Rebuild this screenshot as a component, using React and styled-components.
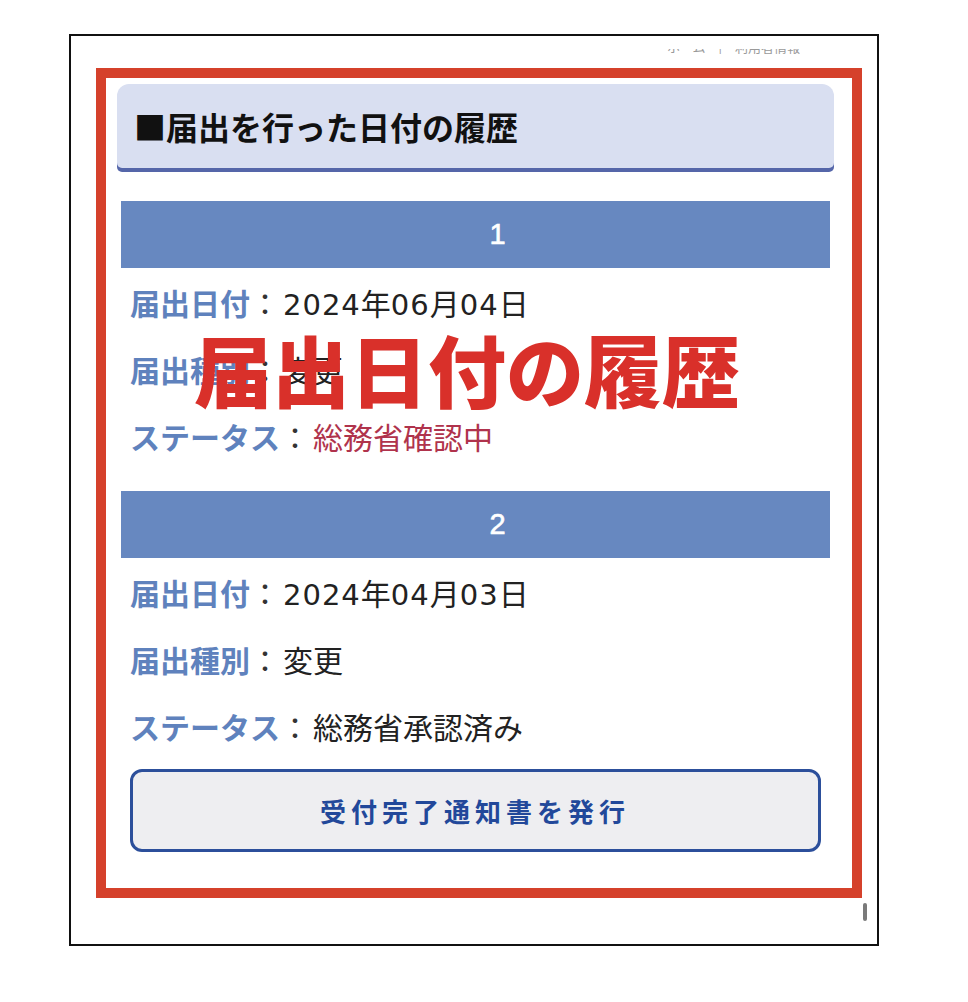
import React from "react";
import styled, { createGlobalStyle } from "styled-components";

const GlobalStyle = createGlobalStyle`
  body {
    margin: 0;
    background: #ffffff;
    font-family: "Noto Sans CJK JP", "Noto Sans", sans-serif;
  }
`;

const Frame = styled.div`
  position: relative;
  box-sizing: border-box;
  width: 810px;
  height: 912px;
  margin: 34px 0 0 69px;
  padding: 0 15px 0 25px;
  border: 2px solid #111111;
  background: #ffffff;
`;

const TopHint = styled.div`
  display: flex;
  justify-content: flex-end;
  height: 32px;
  padding: 13px 62px 0 0;
  box-sizing: border-box;
`;

// only the lower edge of this link row peeks out in the screenshot
const HintClip = styled.div`
  height: 5px;
  overflow: hidden;
  font-size: 13px;
  line-height: 14px;
  color: #9a9a9a;
  white-space: nowrap;
  & span {
    display: block;
    margin-top: -9px;
  }
`;

const RedFrame = styled.div`
  position: relative;
  box-sizing: border-box;
  height: 830px;
  border: 10px solid #d5412b;
  padding: 6px 18px 0 11px;
`;

const Heading = styled.div`
  display: flex;
  align-items: center;
  height: 84px;
  padding-left: 17px;
  border-radius: 12px 12px 5px 5px;
  background: #d9dff1;
  box-shadow: 0 4px 0 #5566a9;
  font-size: 32px;
  font-weight: 700;
  color: #111111;
`;

const Body = styled.div`
  display: flex;
  flex-direction: column;
  margin-top: 33px;
  padding: 0 4px;
`;

const Entries = styled.div`
  display: flex;
  flex-direction: column;
  gap: 22px;
`;

const Entry = styled.section`
  display: flex;
  flex-direction: column;
`;

const NumberBar = styled.div`
  display: flex;
  align-items: center;
  justify-content: center;
  height: 67px;
  padding-left: 44px;
  background: #6788c0;
  color: #ffffff;
  font-family: "Liberation Sans", sans-serif;
  font-size: 29px;
  font-weight: 400;
  -webkit-text-stroke: 0.6px #ffffff;
`;

const Row = styled.div`
  display: flex;
  align-items: center;
  height: 67px;
  padding-left: 9px;
  font-size: 30px;
  color: #222222;
`;

const Label = styled.span`
  color: #5f82bd;
  font-weight: 700;
`;

const Colon = styled.span`
  margin-right: 3px;
  color: #333333;
`;

const Value = styled.span`
  color: ${(p) => (p.$alert ? "#b0334c" : "#222222")};
`;

const Digits = styled.span`
  font-family: "DejaVu Sans", sans-serif;
  font-size: 29px;
  letter-spacing: 1px;
`;

const IssueButton = styled.button`
  display: flex;
  align-items: center;
  justify-content: center;
  box-sizing: border-box;
  height: 83px;
  margin: 10px 9px 0;
  padding-left: 5px;
  border: 3px solid #2c4f9b;
  border-radius: 12px;
  background: #eeeef1;
  color: #22489a;
  font-family: inherit;
  font-size: 26px;
  font-weight: 700;
  letter-spacing: 5px;
`;

const Overlay = styled.div`
  position: absolute;
  left: 88px;
  top: 251px;
  font-size: 78px;
  line-height: 1;
  font-weight: 900;
  color: #d9302a;
  white-space: nowrap;
  pointer-events: none;
`;

const ScrollThumb = styled.div`
  position: absolute;
  right: 10px;
  top: 867px;
  width: 4px;
  height: 18px;
  border-radius: 2px;
  background: #7a7a7a;
`;

const history = [
  { no: 1, date: ["2024", "年", "06", "月", "04", "日"], kind: "変更", status: "総務省確認中", alert: true },
  { no: 2, date: ["2024", "年", "04", "月", "03", "日"], kind: "変更", status: "総務省承認済み", alert: false },
];

const DateValue = ({ parts }) => (
  <Value>
    {parts.map((p, i) => (/\d/.test(p) ? <Digits key={i}>{p}</Digits> : <span key={i}>{p}</span>))}
  </Value>
);

const App = () => {
  return (
    <>
      <GlobalStyle />
      <Frame>
        <TopHint>
          <HintClip>
            <span>ホーム　|　利用者情報</span>
          </HintClip>
        </TopHint>
        <RedFrame>
          <Heading>■届出を行った日付の履歴</Heading>
          <Body>
            <Entries>
              {history.map((h) => (
                <Entry key={h.no}>
                  <NumberBar>{h.no}</NumberBar>
                  <Row>
                    <Label>届出日付</Label>
                    <Colon>：</Colon>
                    <DateValue parts={h.date} />
                  </Row>
                  <Row>
                    <Label>届出種別</Label>
                    <Colon>：</Colon>
                    <Value>{h.kind}</Value>
                  </Row>
                  <Row>
                    <Label>ステータス</Label>
                    <Colon>：</Colon>
                    <Value $alert={h.alert}>{h.status}</Value>
                  </Row>
                </Entry>
              ))}
            </Entries>
            <IssueButton type="button">受付完了通知書を発行</IssueButton>
          </Body>
          <Overlay>届出日付の履歴</Overlay>
        </RedFrame>
        <ScrollThumb />
      </Frame>
    </>
  );
};

export default App;
